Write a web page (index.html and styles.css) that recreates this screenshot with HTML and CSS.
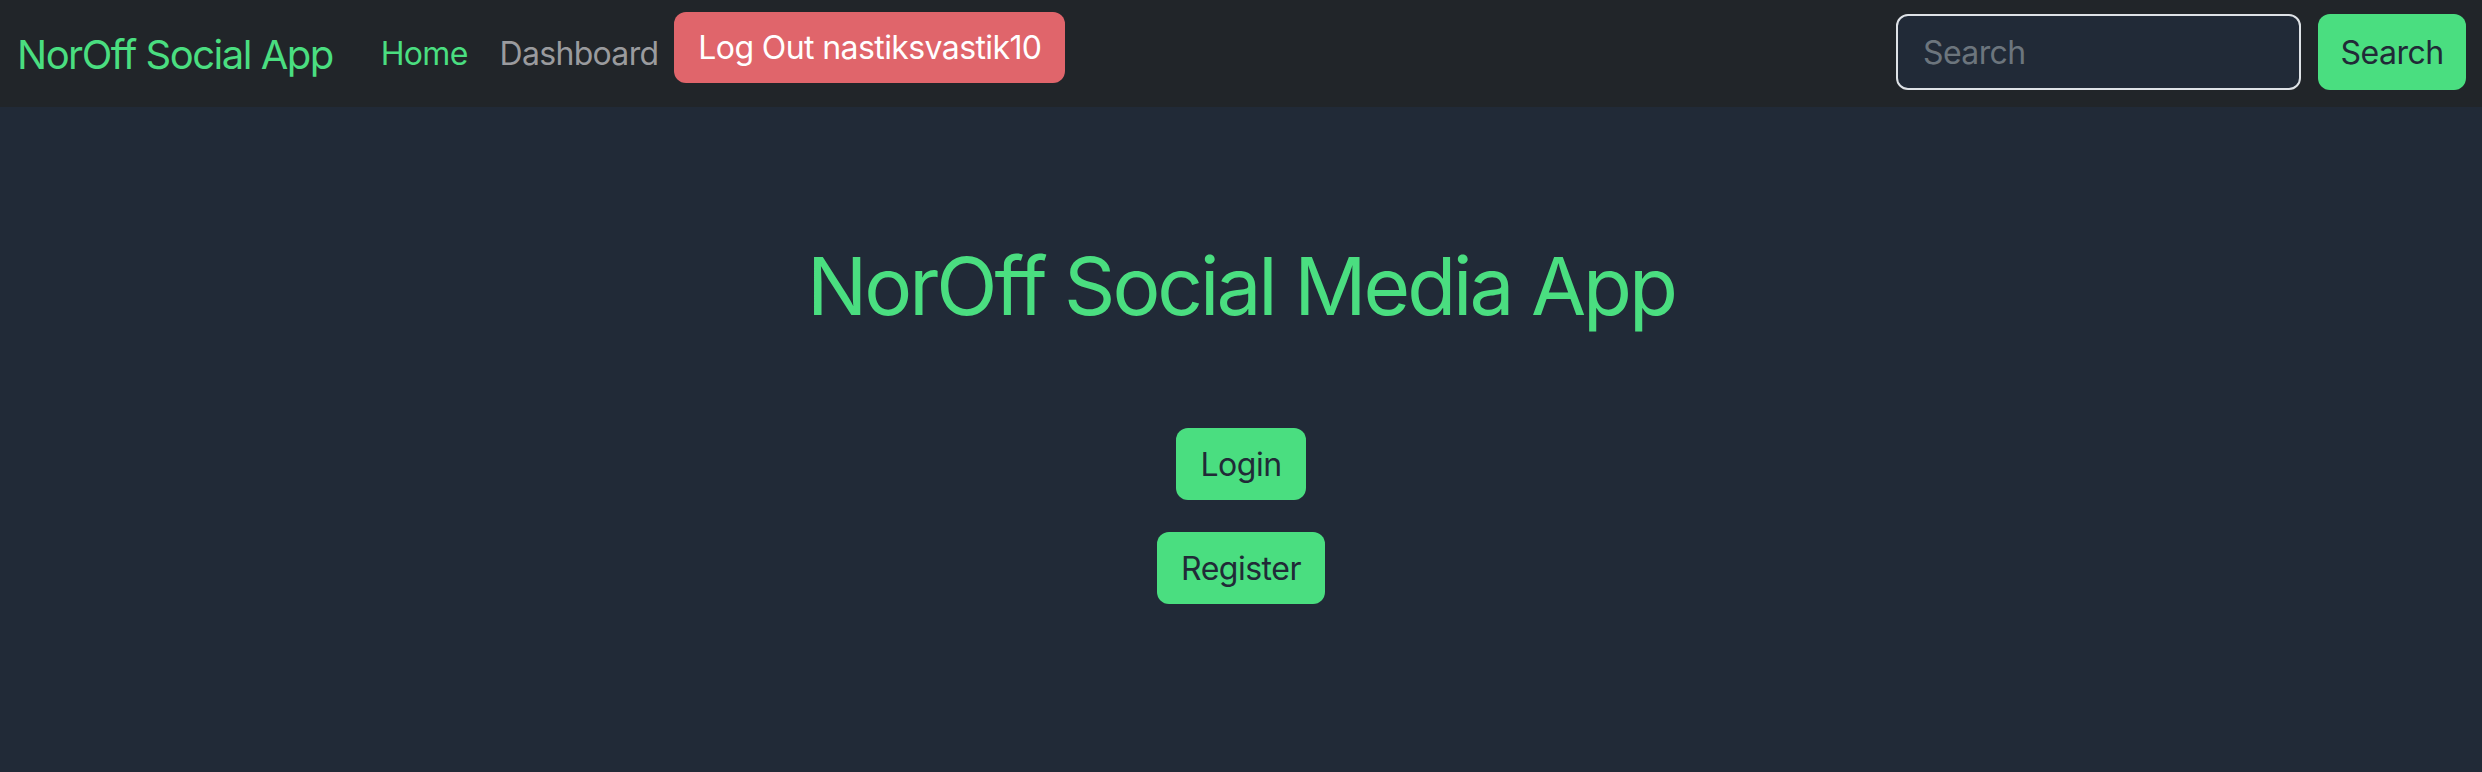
FILE: index.html
```html
<!DOCTYPE html>
<html lang="en">
<head>
<meta charset="utf-8">
<title>NorOff Social App</title>
<link rel="stylesheet" href="styles.css">
</head>
<body>
<nav class="navbar">
  <a class="brand" href="#">NorOff Social App</a>
  <ul class="nav-links">
    <li><a class="nav-link active" href="#">Home</a></li>
    <li><a class="nav-link" href="#">Dashboard</a></li>
    <li><button class="btn btn-logout" type="button">Log Out nastiksvastik10</button></li>
  </ul>
  <form class="search-form">
    <input class="search-input" type="search" placeholder="Search">
    <button class="btn btn-green btn-search" type="button">Search</button>
  </form>
</nav>
<main class="hero">
  <h1 class="hero-title">NorOff Social Media App</h1>
  <div class="hero-actions">
    <button class="btn btn-green btn-hero" type="button">Login</button>
    <button class="btn btn-green btn-hero" type="button">Register</button>
  </div>
</main>
</body>
</html>
```

FILE: styles.css
```css
* { box-sizing: border-box; }

html, body {
  margin: 0;
  padding: 0;
}

body {
  background: #212a37;
  font-family: Inter, "Noto Sans", "Liberation Sans", sans-serif;
  letter-spacing: -0.6px;
  color: #e5e7eb;
  min-height: 772px;
}

.navbar {
  display: flex;
  align-items: center;
  height: 107px;
  padding: 0 16px 0 17px;
  background: #212529;
}

.brand {
  font-size: 40px;
  line-height: 60px;
  letter-spacing: -1.5px;
  color: #4ade80;
  text-decoration: none;
  margin-right: 32px;
  margin-top: 2px;
}

.nav-links {
  display: flex;
  align-items: center;
  list-style: none;
  margin: 0;
  padding: 0;
}

.nav-link {
  display: block;
  font-size: 32px;
  line-height: 48px;
  letter-spacing: -0.7px;
  padding: 0 16px;
  color: #9a9b9e;
  text-decoration: none;
}

.nav-link.active { color: #4ade80; }

.btn {
  font-family: inherit;
  font-size: 32px;
  letter-spacing: -0.5px;
  border: none;
  border-radius: 12px;
  cursor: pointer;
  padding: 0 24px;
}

.btn-logout {
  height: 71px;
  margin-bottom: 12px;
  background: #e0656b;
  color: #ffffff;
  letter-spacing: -0.6px;
}

.btn-green {
  background: #4ade80;
  color: #212a37;
}

.search-form {
  display: flex;
  align-items: center;
  gap: 17px;
  margin-left: auto;
  margin-bottom: 3px;
}

.search-input {
  width: 405px;
  height: 76px;
  padding: 0 25px;
  font-family: inherit;
  font-size: 32px;
  letter-spacing: -0.6px;
  color: #e5e7eb;
  background: #212a37;
  border: 2px solid #dee2e6;
  border-radius: 12px;
  outline: none;
}

.search-input::placeholder { color: #6c757d; }

.btn-search {
  height: 76px;
  width: 148px;
  padding: 0;
}

.hero {
  display: flex;
  flex-direction: column;
  align-items: center;
  padding-top: 131px;
}

.hero-title {
  margin: 0;
  font-size: 80px;
  line-height: 96px;
  letter-spacing: -3px;
  font-weight: 400;
  color: #4ade80;
}

.hero-actions {
  display: flex;
  flex-direction: column;
  align-items: center;
  gap: 32px;
  margin-top: 94px;
}

.btn-hero {
  height: 72px;
}
```
